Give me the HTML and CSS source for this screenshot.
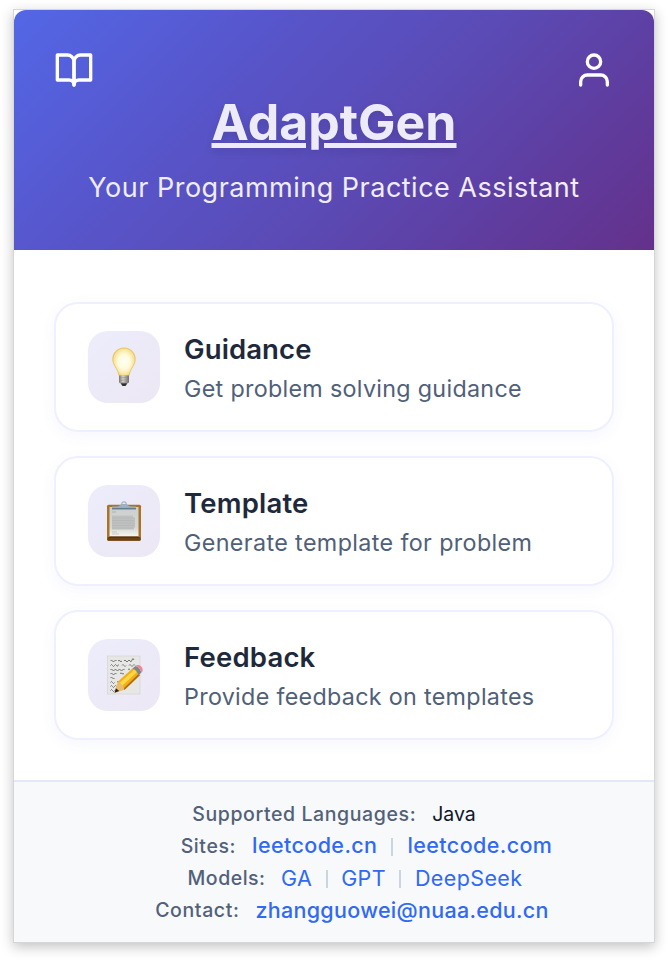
FILE: index.html
```html
<!DOCTYPE html>
<html lang="en">
<head>
<meta charset="utf-8">
<title>AdaptGen</title>
<link rel="stylesheet" href="styles.css">
</head>
<body>
<main class="popup">
  <header class="header">
    <nav class="nav">
      <svg class="nav-icon" viewBox="0 0 24 24"><path d="M2 3h6a4 4 0 0 1 4 4v14a3 3 0 0 0-3-3H2z"/><path d="M22 3h-6a4 4 0 0 0-4 4v14a3 3 0 0 1 3-3h7z"/></svg>
      <svg class="nav-icon round" viewBox="0 0 24 24"><path d="M20 21v-2a4 4 0 0 0-4-4H8a4 4 0 0 0-4 4v2"/><circle cx="12" cy="7" r="4"/></svg>
    </nav>
    <h1 class="title">AdaptGen</h1>
    <p class="subtitle">Your Programming Practice Assistant</p>
  </header>
  <section class="cards">
    <article class="card">
      <div class="tile">
        <svg class="emoji" viewBox="0 0 40 40">
          <defs>
            <radialGradient id="glow" cx=".5" cy=".5" r=".58"><stop offset="0" stop-color="#fffff6"/><stop offset=".45" stop-color="#fffbdc"/><stop offset=".8" stop-color="#f8e398"/><stop offset="1" stop-color="#e3b544"/></radialGradient>
            <linearGradient id="metal"><stop offset="0" stop-color="#77736b"/><stop offset=".4" stop-color="#d8d5cc"/><stop offset="1" stop-color="#706c65"/></linearGradient>
          </defs>
          <path d="M20 1c-6.600 0-11.200 5-11.200 11.300 0 6 5 9 6.200 16.200h10c1.200-7.200 6.200-10.200 6.200-16.200C31.200 6 26.600 1 20 1z" fill="url(#glow)" stroke="#e6bd54" stroke-width=".8"/>
          <path d="M15 28.500h10v7q-5 2.500-10 0z" fill="url(#metal)"/>
          <path d="M15 31l10-.8M15 33.500l10-.8M15.500 35.800l9-.8" stroke="#8a867e" stroke-width=".5"/>
          <path d="M16.500 36.300h7L21.500 39h-3z" fill="#302e2e"/>
        </svg>
      </div>
      <div class="info"><h2 class="name">Guidance</h2><p class="desc d1">Get problem solving guidance</p></div>
    </article>
    <article class="card">
      <div class="tile">
        <svg class="emoji" viewBox="0 0 40 40">
          <defs><linearGradient id="sheet" x2="0" y2="1"><stop offset="0" stop-color="#cccecf"/><stop offset=".7" stop-color="#d6d8d7"/><stop offset="1" stop-color="#f6f7f2"/></linearGradient></defs>
          <rect x="3" y="3.700" width="34" height="36" rx="1.500" fill="#a97428"/>
          <rect x="3.500" y="36" width="33" height="3.700" rx="1" fill="#6b4218"/>
          <rect x="5.500" y="6" width="29" height="29.500" fill="url(#sheet)"/>
          <path d="M5.500 35.500h29v1.200h-29z" fill="#473015"/>
          <path d="M8 11h4" stroke="#aaa" stroke-width=".8"/>
          <path d="M8 14.500h21v2h2v10h-1v2H8z" fill="#bfc1c0"/>
          <path d="M8 17h22M8 19.500h22M8 22h22M8 24.500h22M8 27h21M8 31h5M8 33h7" stroke="#b2b4b3" stroke-width=".6"/>
          <path d="M8 5.500q8 .5 9-2.500h6q1 3 9 2.500v2.700H8z" fill="#9baebd"/>
          <path d="M8 7.800h24" stroke="#51677c" stroke-width="1"/>
          <circle cx="20" cy="3" r="2.200" fill="none" stroke="#a5b5c2" stroke-width="1.200"/>
        </svg>
      </div>
      <div class="info"><h2 class="name n2">Template</h2><p class="desc d2">Generate template for problem</p></div>
    </article>
    <article class="card">
      <div class="tile">
        <svg class="emoji" viewBox="0 0 40 40">
          <rect x="3.500" y="1" width="32.500" height="38" fill="#e7e8e5" stroke="#cfd1d0" stroke-width=".6"/>
          <path d="M6.500 6q1-2 2 0t2 0 2 0M14 6q1-1.500 2 0t2 0M20 6q1-2 2 0t2 0 2 0 2-1 2 0M6.500 10.500q1-2 2 0t2 0 2 0 2-1M18 10.500q1-2 2 0t2 0M25 10.500q1-2 2 0t2 0 2 0M6.500 15q1-2 2 0t2 0 2 0 2 0 2 0 2 0 2 0M24 14.500q1-1 2 0M6.500 19q1-2 2 0t2 0 2 0M16 18.500q1-1 2 0t2 0M6.500 23q1-2 2 0t2 0M6.500 27.500q1-2 2 0t2 0M13 27q1-1 2 0M6.500 31.500q1-2 2 0t2 0 2 0M6.500 35.500q1-2 2 0t2 0" fill="none" stroke="#55585a" stroke-width=".8"/>
          <path d="M10.500 37.800L14 26.500 29.500 12.500l6.500 6.500L20 34.500z" fill="#f2ae1c"/>
          <path d="M15.500 28L30.500 14.500l2.500 2.500L18 31z" fill="#ffd843"/>
          <path d="M19 34l15.500-15 1.500 1.300L20.500 35z" fill="#b76c0c"/>
          <path d="M10.500 37.800l3.500-11q4.500 2 6.500 8z" fill="#e8bb72"/>
          <path d="M10.500 37.800l1.400-4.500 3.300 2.700z" fill="#26211e"/>
          <path d="M28.500 13.500l3-2.500q4.500 1.500 6 6.500L34.500 20.300q-1.500-5-6-6.800z" fill="#7b8790"/>
          <path d="M31.500 11c1.700-2.500 7.200-.5 7.200 3.700 0 1.300-.5 2.200-1.200 2.800q-1.500-5-6-6.500z" fill="#ee8793"/>
        </svg>
      </div>
      <div class="info"><h2 class="name n3">Feedback</h2><p class="desc d3">Provide feedback on templates</p></div>
    </article>
  </section>
  <footer class="footer">
    <div class="row r1"><span class="label l1">Supported Languages:</span><span class="plain">Java</span></div>
    <div class="row r2"><span class="label l2">Sites:</span><a class="link">leetcode.cn</a><i class="bar"></i><a class="link">leetcode.com</a></div>
    <div class="row r3"><span class="label l3">Models:</span><a class="link thin">GA</a><i class="bar"></i><a class="link thin">GPT</a><i class="bar"></i><a class="link thin">DeepSeek</a></div>
    <div class="row r4"><span class="label l4">Contact:</span><a class="link mail">zhangguowei@nuaa.edu.cn</a></div>
  </footer>
</main>
</body>
</html>
```

FILE: styles.css
```css
* { box-sizing: border-box; margin: 0; padding: 0; }
body { min-height: 960px; background: #fff; font-family: Inter, "Liberation Sans", sans-serif; padding: 9px 13px; }
.popup {
  width: 642px; height: 934px; border: 1px solid #d6d6d6; background: #fff;
  box-shadow: 0 4px 12px rgba(0,0,0,.24);
}
.header {
  height: 240px; padding: 40px; border-radius: 12px 12px 0 0; color: #fff;
  background: linear-gradient(135deg, #5367e6 0%, #5756cc 30%, #5b4ab4 58%, #5f3c9e 80%, #64318b 100%);
}
.nav { display: flex; justify-content: space-between; height: 40px; }
.nav-icon { width: 40px; height: 40px; fill: none; stroke: #fff; stroke-width: 2; stroke-linejoin: round; }
.round { stroke-linecap: round; }
.title {
  height: 64px; line-height: 64px; text-align: center; white-space: nowrap;
  font-size: 50px; font-weight: 700; letter-spacing: 0; color: #eeebf8;
  text-decoration: underline; text-decoration-thickness: 5px; text-underline-offset: 3px;
  text-shadow: 0 4px 8px rgba(0,0,0,.12);
}
.subtitle {
  margin-top: 17px; height: 34px; line-height: 34px; text-align: center; white-space: nowrap;
  font-size: 27px; letter-spacing: .49px; color: #efedf9;
}
.cards { padding: 52px 40px 40px; display: flex; flex-direction: column; gap: 24px; }
.card {
  height: 130px; display: flex; align-items: center; gap: 24px; padding: 0 32px;
  border: 2px solid #eeefff; border-radius: 24px; background: #fff;
  box-shadow: 0 4px 16px rgba(80,100,230,.05);
}
.tile {
  width: 72px; height: 72px; border-radius: 20px; display: flex; align-items: center; justify-content: center;
  background: linear-gradient(135deg, #ecedfb, #ede7f4);
}
.emoji { width: 40px; height: 40px; }
.info { padding-top: 3px; }
.name { height: 40px; line-height: 40px; font-size: 27.500px; font-weight: 600; color: #1e293b; white-space: nowrap; letter-spacing: .1px; }
.n2, .n3 { letter-spacing: .2px; }
.desc { height: 39px; line-height: 39px; font-size: 23.300px; color: #506079; white-space: nowrap; letter-spacing: .31px; }
.d2 { letter-spacing: .38px; }
.footer {
  height: 162px; border-top: 2px solid #e3e7fc; background: #f8f9fb; padding-top: 16px;
  display: flex; flex-direction: column; align-items: center;
}
.row { height: 32px; display: flex; align-items: center; white-space: nowrap; }
.r2 { padding-left: 65px; }
.r2 .link { margin-top: -2px; }
.r3 { padding-left: 42px; }
.r4 { padding-left: 36px; }
.label { font-size: 19.500px; font-weight: 500; letter-spacing: .6px; color: #52617a; margin-right: 16px; }
.l3 { letter-spacing: .5px; margin-right: 15.500px; }
.plain { font-size: 19.500px; color: #0f172a; }
.link { font-size: 21.500px; font-weight: 500; letter-spacing: .4px; color: #2f69f5; }
.thin { font-weight: 400; letter-spacing: .38px; }
.mail { letter-spacing: .3px; }
.bar { width: 2px; height: 18px; margin: 2px 14px 0; background: #cbd5e1; }
.r3 .bar { margin: 2px 13.500px 0; }
```
